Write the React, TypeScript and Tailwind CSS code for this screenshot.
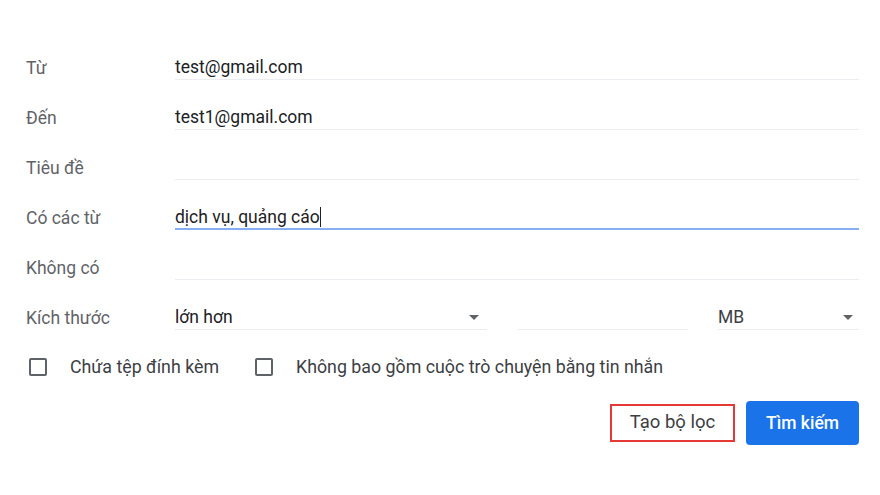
import React from 'react';

const font = { fontFamily: 'Roboto, "Noto Sans", Arial, sans-serif' };

interface FieldRowProps {
  label: string;
  value?: string;
  focused?: boolean;
}

const Caret = () => (
  <svg width="10" height="5" viewBox="0 0 10 5" className="shrink-0">
    <path d="M0 0h10L5 5z" fill="#5f6368" />
  </svg>
);

const FieldRow: React.FC<FieldRowProps> = ({ label, value, focused }) => (
  <div className="flex items-end h-[50px]">
    <div className="w-[149px] shrink-0 leading-[24px] text-[17.5px] text-[#5f6368]">{label}</div>
    <div className="flex-1 flex flex-col">
      <div className="h-[24px] leading-[24px] text-[17.5px] text-[#202124] whitespace-nowrap">
        {value}
        {focused && <span className="inline-block w-px h-[20px] bg-[#202124] align-[-4px]" />}
      </div>
      {focused ? (
        <div className="h-[2px] -mt-px bg-[#86aef0]" />
      ) : (
        <div className="h-px bg-[#ebedf0]" />
      )}
    </div>
  </div>
);

const Checkbox: React.FC<{ label: string }> = ({ label }) => (
  <label className="flex items-center">
    <span className="ml-[3px] w-[18px] h-[18px] rounded-[2px] border-2 border-[#5f6368] shrink-0" />
    <span className="ml-[23px] text-[17.8px] text-[#3c4043] whitespace-nowrap">{label}</span>
  </label>
);

export default function App() {
  return (
    <div className="w-[880px] h-[495px] bg-white pt-[30px] pl-[26px] pr-[21px]" style={font}>
      <FieldRow label="Từ" value="test@gmail.com" />
      <FieldRow label="Đến" value="test1@gmail.com" />
      <FieldRow label="Tiêu đề" />
      <FieldRow label="Có các từ" value="dịch vụ, quảng cáo" focused />
      <FieldRow label="Không có" />

      <div className="flex items-end h-[50px]">
        <div className="w-[149px] shrink-0 leading-[24px] text-[17.5px] text-[#5f6368]">Kích thước</div>
        <div className="w-[312px] h-[25px] flex items-center justify-between pr-[8px] border-b border-b-[#ebedf0] text-[17.5px] text-[#202124]">
          <span>lớn hơn</span>
          <Caret />
        </div>
        <div className="ml-[31px] w-[170px] h-[25px] border-b border-b-[#ebedf0]" />
        <div className="ml-[30px] flex-1 h-[25px] flex items-center justify-between pr-[6px] border-b border-b-[#ebedf0] text-[17.5px] text-[#3c4043]">
          <span>MB</span>
          <Caret />
        </div>
      </div>

      <div className="flex items-center mt-[26px] h-[22px]">
        <Checkbox label="Chứa tệp đính kèm" />
        <div className="ml-[33px]">
          <Checkbox label="Không bao gồm cuộc trò chuyện bằng tin nhắn" />
        </div>
      </div>

      <div className="flex justify-end items-center mt-[23px]">
        <button className="w-[125px] h-[38px] border-2 border-[#e53935] text-[18.5px] text-[#3c4043]">
          Tạo bộ lọc
        </button>
        <button className="ml-[11px] w-[113px] h-[44px] rounded-[4px] bg-[#1a73e8] text-white text-[17.5px] font-medium">
          Tìm kiếm
        </button>
      </div>
    </div>
  );
}
